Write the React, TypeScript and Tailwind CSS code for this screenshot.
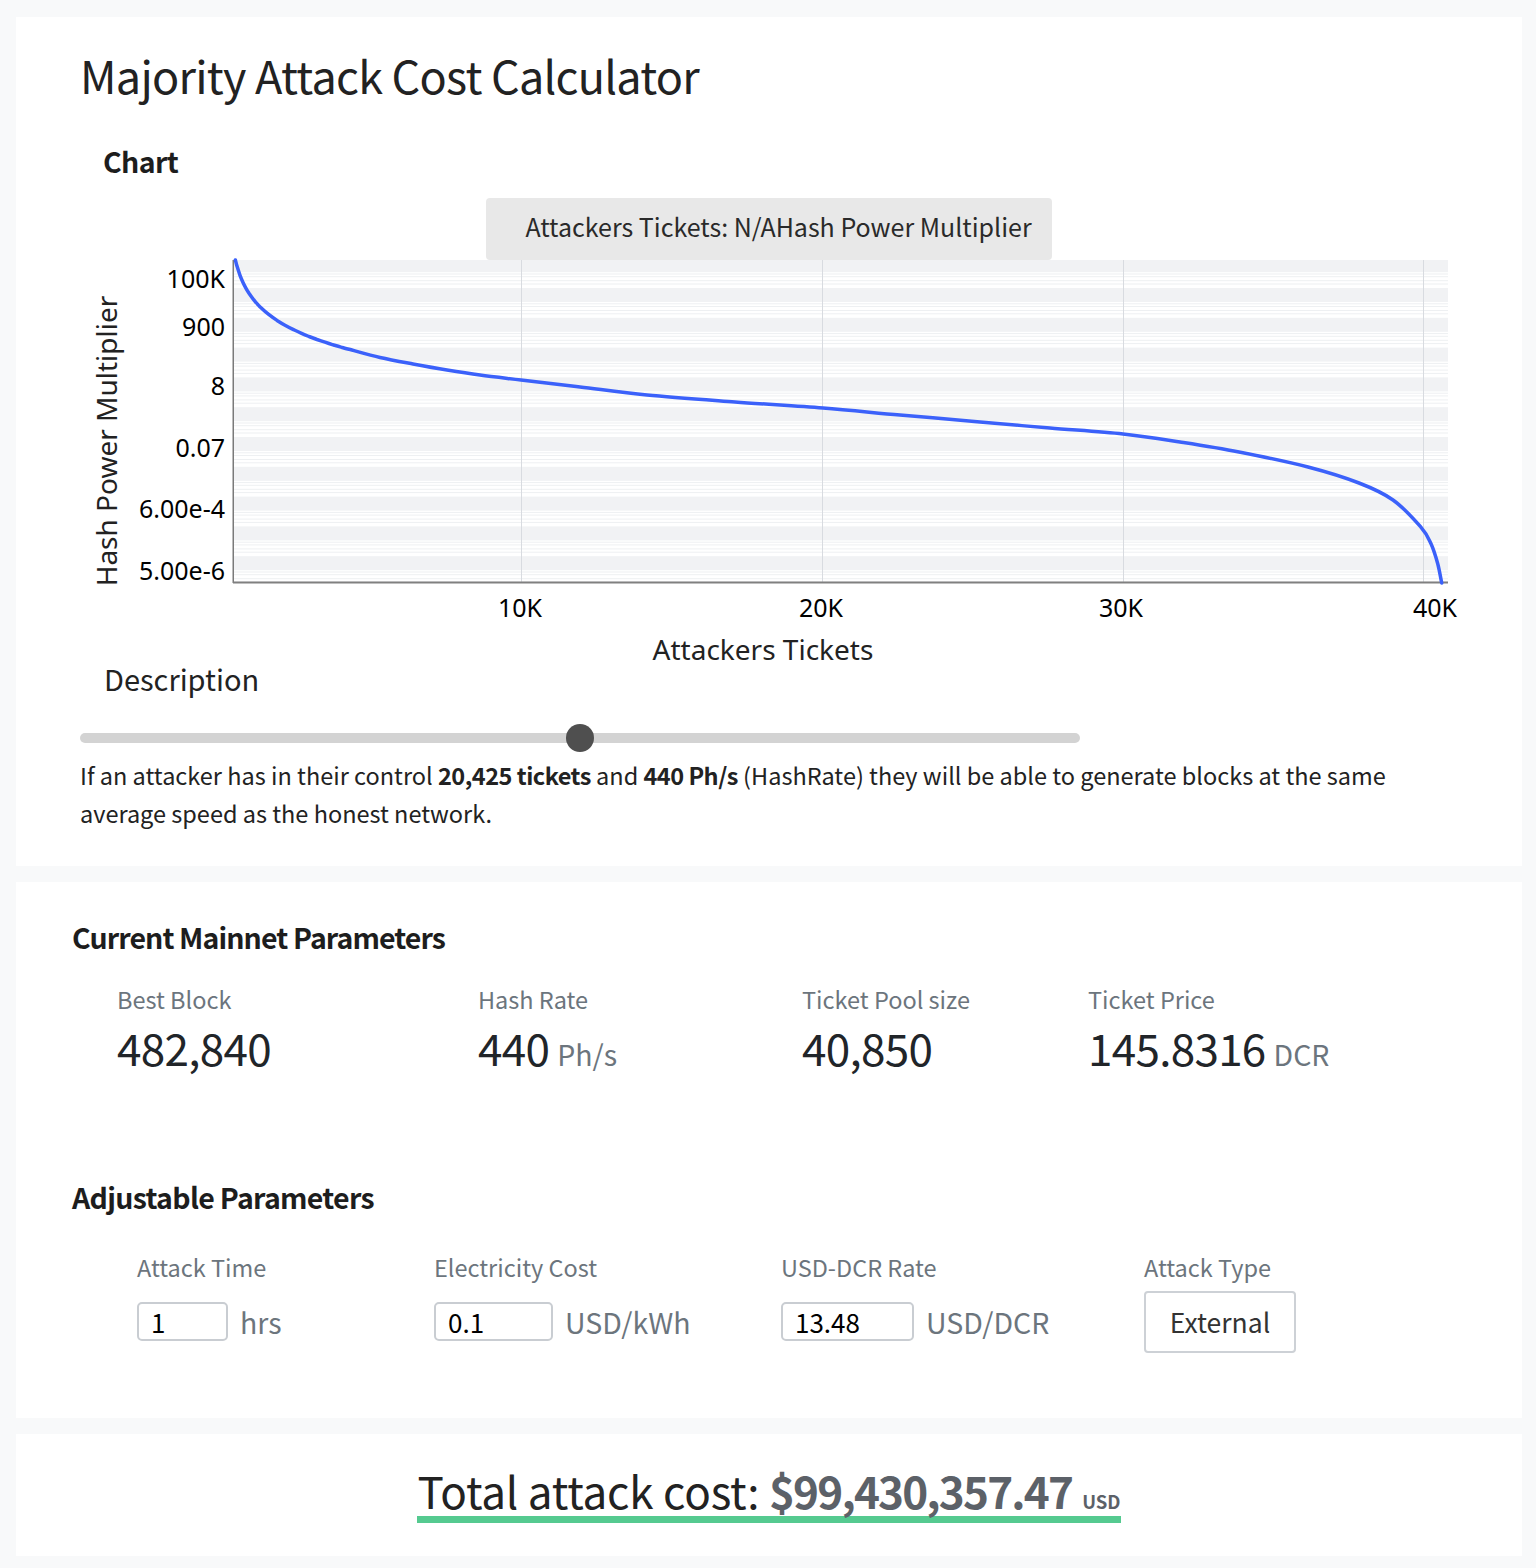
import React from "react";

const ORIGIN_X = 80;
const ORIGIN_Y = 260;

// head of the curve follows a log shape, the rest is sampled from the reference
function curvePoints(): [number, number][] {
  const pts: [number, number][] = [[235.4, 260]];
  for (let x = 237; x <= 350; x += x < 260 ? 3 : 8) {
    pts.push([x, 338 + 32 * (Math.log(x - 228) - Math.log(85))]);
  }
  return pts.concat([
    [380, 357.5], [413, 364], [447, 370], [480, 375], [521, 380], [580, 387], [647, 395],
    [735, 402], [823, 408], [900, 415], [980, 422], [1050, 428], [1123, 434], [1180, 442],
    [1239, 452], [1308, 467], [1359, 483], [1393, 500], [1420.5, 526.7], [1430.8, 543.3],
    [1437.6, 563.3], [1441.7, 583],
  ]);
}

function curvePath() {
  const p = curvePoints().map(([x, y]) => [x - ORIGIN_X, y - ORIGIN_Y]);
  let d = `M${p[0][0]},${p[0][1]}`;
  for (let i = 0; i < p.length - 1; i++) {
    const p0 = p[i - 1] || p[i];
    const p1 = p[i];
    const p2 = p[i + 1];
    const p3 = p[i + 2] || p2;
    const c1x = p1[0] + (p2[0] - p0[0]) / 6;
    const c1y = p1[1] + (p2[1] - p0[1]) / 6;
    const c2x = p2[0] - (p3[0] - p1[0]) / 6;
    const c2y = p2[1] - (p3[1] - p1[1]) / 6;
    d += ` C${c1x.toFixed(1)},${c1y.toFixed(1)} ${c2x.toFixed(1)},${c2y.toFixed(1)} ${p2[0].toFixed(1)},${p2[1].toFixed(1)}`;
  }
  return d;
}

const PLOT_L = 153;
const PLOT_R = 1368;
const PLOT_H = 322;

function Grid() {
  const bands: React.ReactNode[] = [];
  for (let k = 0; k < 12; k++) {
    const y = -1.8 + 29.8 * k;
    const top = Math.max(0, y);
    const bottom = Math.min(PLOT_H, y + 14);
    if (bottom > top) {
      bands.push(<rect key={`b${k}`} x={PLOT_L} y={top} width={PLOT_R - PLOT_L} height={bottom - top} fill="#f1f2f4" />);
    }
    [15.3, 18, 22, 25.3].forEach((o, j) => {
      const ly = y + o;
      if (ly > 0 && ly < PLOT_H) {
        bands.push(<rect key={`l${k}-${j}`} x={PLOT_L} y={ly} width={PLOT_R - PLOT_L} height={1} fill="#eef0f2" />);
      }
    });
  }
  return <g>{bands}</g>;
}

function Chart() {
  const yTicks = [
    ["100K", 27.7],
    ["900", 76],
    ["8", 135],
    ["0.07", 197],
    ["6.00e-4", 258],
    ["5.00e-6", 320],
  ] as const;
  const xTicks = [
    ["10K", 440, 441],
    ["20K", 741, 742],
    ["30K", 1041, 1043],
    ["40K", 1355, 1343],
  ] as const;
  return (
    <svg width={1378} height={400} className="block overflow-visible">
      <rect x={PLOT_L} y={0} width={PLOT_R - PLOT_L} height={PLOT_H} fill="#ffffff" />
      <Grid />
      {xTicks.map(([, , gx]) => (
        <rect key={gx} x={gx} y={0} width={1} height={PLOT_H} fill="#d8dbe0" />
      ))}
      <rect x={PLOT_L - 0.5} y={0} width={1.5} height={PLOT_H + 1} fill="#7a7a7a" />
      <rect x={PLOT_L} y={PLOT_H - 0.5} width={PLOT_R - PLOT_L} height={2} fill="#808080" />
      <path d={curvePath()} fill="none" stroke="#3b61fa" strokeWidth={3.5} strokeLinejoin="round" strokeLinecap="round" />
      <g fontFamily="'Noto Sans', sans-serif" fontSize={25} fill="#000">
        {yTicks.map(([t, y]) => (
          <text key={t} x={145} y={y} textAnchor="end">{t}</text>
        ))}
        {xTicks.map(([t, x]) => (
          <text key={t} x={x} y={357} textAnchor="middle">{t}</text>
        ))}
      </g>
      <g fontFamily="'Noto Sans', sans-serif" fontSize={28} fill="#222">
        <text x={683} y={400} textAnchor="middle">Attackers Tickets</text>
        <text transform="translate(37,181) rotate(-90)" textAnchor="middle">Hash Power Multiplier</text>
      </g>
    </svg>
  );
}

function Stat({ label, value, unit, w }: { label: string; value: string; unit?: string; w?: string }) {
  return (
    <div className={w}>
      <div className="text-[23.5px] leading-[32px] text-[#6c757d]">{label}</div>
      <div className="mt-[3.5px] text-[44px] leading-[56px] tracking-[-0.7px] text-[#212529] whitespace-nowrap">
        {value}
        {unit && <span className="ml-[8px] text-[28.5px] leading-none tracking-normal text-[#6c757d]">{unit}</span>}
      </div>
    </div>
  );
}

function Field({ label, value, unit, inputW, w }: { label: string; value: string; unit: string; inputW: string; w: string }) {
  return (
    <div className={w}>
      <div className="text-[23.5px] leading-[32px] text-[#6c757d]">{label}</div>
      <div className="mt-[7.5px] h-[62px] flex items-center">
        <input
          readOnly
          value={value}
          className={`${inputW} h-[39px] border-2 border-[#c9cdd2] rounded-[5px] pl-[12px] text-[26px] text-black outline-none`}
        />
        <span className="ml-3 text-[28.5px] leading-[36px] text-[#6c757d]">{unit}</span>
      </div>
    </div>
  );
}

export default function App() {
  return (
    <div className="min-h-screen bg-[#f8f9fa] pt-[17px] pb-[12px] font-['Noto_Sans_CJK_SC','Noto_Sans',sans-serif] text-[#212529]">
      {/* Chart card */}
      <section className="ml-4 mr-[14px] bg-white pt-[28px] pl-16 pr-16 pb-[34px]">
        <h1 className="text-[45px] leading-[60px] tracking-[-0.75px] font-normal text-[#222]">Majority Attack Cost Calculator</h1>
        <h2 className="mt-[36px] ml-[23px] text-[28.5px] leading-[40px] tracking-[-0.6px] font-bold text-[#1d1d1d]">Chart</h2>
        <div className="mt-[17px] flex justify-center">
          <div className="h-[62px] bg-[#e8e8e8] rounded-[4px] pl-[39px] pr-[20px] text-[25px] leading-[56px] text-[#2a2a2a]">
            Attackers Tickets: N/AHash Power Multiplier
          </div>
        </div>
        <Chart />
        <div className="ml-[24px] text-[29px] leading-[36px] text-[#222]">Description</div>
        <div className="relative mt-[28px] w-[1000px] h-[28px]">
          <div className="absolute left-0 right-0 top-[9px] h-[10px] rounded-full bg-[#d3d3d3]" />
          <div className="absolute left-[486px] top-0 w-[28px] h-[28px] rounded-full bg-[#4f4f4f]" />
        </div>
        <p className="mt-[3.5px] text-[23.5px] leading-[38px] text-[#222]">
          If an attacker has in their control <b className="font-bold tracking-[-0.5px]">20,425 tickets</b> and{" "}
          <b className="font-bold tracking-[-0.5px]">440 Ph/s</b> (HashRate) they will be able to generate blocks at the
          same average speed as the honest network.
        </p>
      </section>

      {/* Parameters card */}
      <section className="mt-4 ml-4 mr-[14px] bg-white pt-[35px] pl-[56px] pr-16 pb-[65px]">
        <h2 className="text-[28.5px] leading-[40px] tracking-[-0.9px] font-bold text-[#1d1d1d]">Current Mainnet Parameters</h2>
        <div className="mt-[26.5px] pl-[45px] flex">
          <Stat w="w-[361px]" label="Best Block" value="482,840" />
          <Stat w="w-[324px]" label="Hash Rate" value="440" unit="Ph/s" />
          <Stat w="w-[286px]" label="Ticket Pool size" value="40,850" />
          <Stat label="Ticket Price" value="145.8316" unit="DCR" />
        </div>

        <h2 className="mt-[102px] text-[28.5px] leading-[40px] tracking-[-0.7px] font-bold text-[#1d1d1d]">Adjustable Parameters</h2>
        <div className="mt-[34.5px] pl-[65px] flex">
          <Field w="w-[297px]" label="Attack Time" value="1" unit="hrs" inputW="w-[91px]" />
          <Field w="w-[347px]" label="Electricity Cost" value="0.1" unit="USD/kWh" inputW="w-[119px]" />
          <Field w="w-[363px]" label="USD-DCR Rate" value="13.48" unit="USD/DCR" inputW="w-[133px]" />
          <div>
            <div className="text-[23.5px] leading-[32px] text-[#6c757d]">Attack Type</div>
            <div className="mt-[7.5px]">
              <button className="w-[152px] h-[62px] border-2 border-[#cdd1d6] rounded-[4px] bg-white text-[26.5px] text-[#333]">
                External
              </button>
            </div>
          </div>
        </div>
      </section>

      {/* Total card */}
      <section className="mt-4 ml-4 mr-[14px] bg-white pt-[30px] pb-[33px] flex justify-center">
        <div className="border-b-[7px] border-[#55ca90] text-[44px] leading-[52px] tracking-[-0.2px] text-[#222] whitespace-nowrap">
          Total attack cost:{" "}
          <span className="font-bold tracking-[-1.8px] text-[#5c6168]">$99,430,357.47</span>
          <span className="ml-[10px] text-[18.5px] leading-none tracking-normal font-bold text-[#5c6168]">USD</span>
        </div>
      </section>
    </div>
  );
}
